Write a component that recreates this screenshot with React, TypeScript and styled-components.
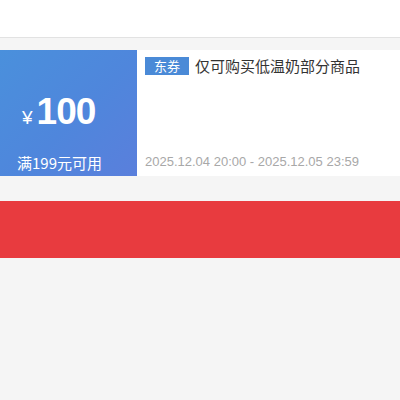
import React from 'react'
import styled, { createGlobalStyle } from 'styled-components'

const Global = createGlobalStyle`
  html, body {
    margin: 0;
    padding: 0;
    background: #f5f5f5;
    font-family: 'Noto Sans CJK SC', 'Liberation Sans', sans-serif;
  }
`

const Page = styled.div`
  width: 400px;
  height: 400px;
  background: #f5f5f5;
  overflow: hidden;
`

const Header = styled.div`
  height: 37px;
  background: #fff;
  border-bottom: 1px solid #e2e2e2;
`

const Card = styled.div`
  display: flex;
  margin-top: 12px;
  height: 126px;
  background: #fff;
`

const Amount = styled.div`
  width: 137px;
  flex-shrink: 0;
  background: linear-gradient(135deg, #4a90dc 0%, #4f86dc 55%, #5a7fdc 100%);
  color: #fff;
  display: flex;
  flex-direction: column;
  padding: 0 0 0 17px;
  box-sizing: border-box;
`

const Price = styled.div`
  display: flex;
  align-items: baseline;
  margin-top: 42px;
  padding-left: 5px;
`

const Yen = styled.span`
  font-family: 'Liberation Sans', sans-serif;
  font-size: 19px;
  margin-right: 4px;
`

const Value = styled.span`
  font-family: 'Liberation Sans', sans-serif;
  font-size: 37px;
  font-weight: 700;
  line-height: 40px;
  letter-spacing: -1px;
`

const Cond = styled.div`
  margin-top: auto;
  margin-bottom: 2px;
  font-size: 15px;
  line-height: 22px;
`

const Info = styled.div`
  flex: 1;
  display: flex;
  flex-direction: column;
  padding: 7px 0 6px 8px;
  margin-top: -1px;
`

const TitleRow = styled.div`
  display: flex;
  align-items: center;
`

const Tag = styled.span`
  background: #4a8ad7;
  color: #fff;
  font-size: 13px;
  line-height: 18px;
  padding: 0 9px;
  margin-right: 6px;
`

const Title = styled.span`
  color: #333;
  font-size: 15px;
  line-height: 20px;
`

const Dates = styled.div`
  margin-top: auto;
  color: #a8a8a8;
  font-family: 'Liberation Sans', sans-serif;
  font-size: 13px;
  line-height: 16px;
`

const Button = styled.div`
  height: 57px;
  margin-top: 25px;
  background: #e83b3f;
`

export default function App() {
  return (
    <Page>
      <Global />
      <Header />
      <Card>
        <Amount>
          <Price>
            <Yen>¥</Yen>
            <Value>100</Value>
          </Price>
          <Cond>满199元可用</Cond>
        </Amount>
        <Info>
          <TitleRow>
            <Tag>东券</Tag>
            <Title>仅可购买低温奶部分商品</Title>
          </TitleRow>
          <Dates>2025.12.04 20:00 - 2025.12.05 23:59</Dates>
        </Info>
      </Card>
      <Button />
    </Page>
  )
}
